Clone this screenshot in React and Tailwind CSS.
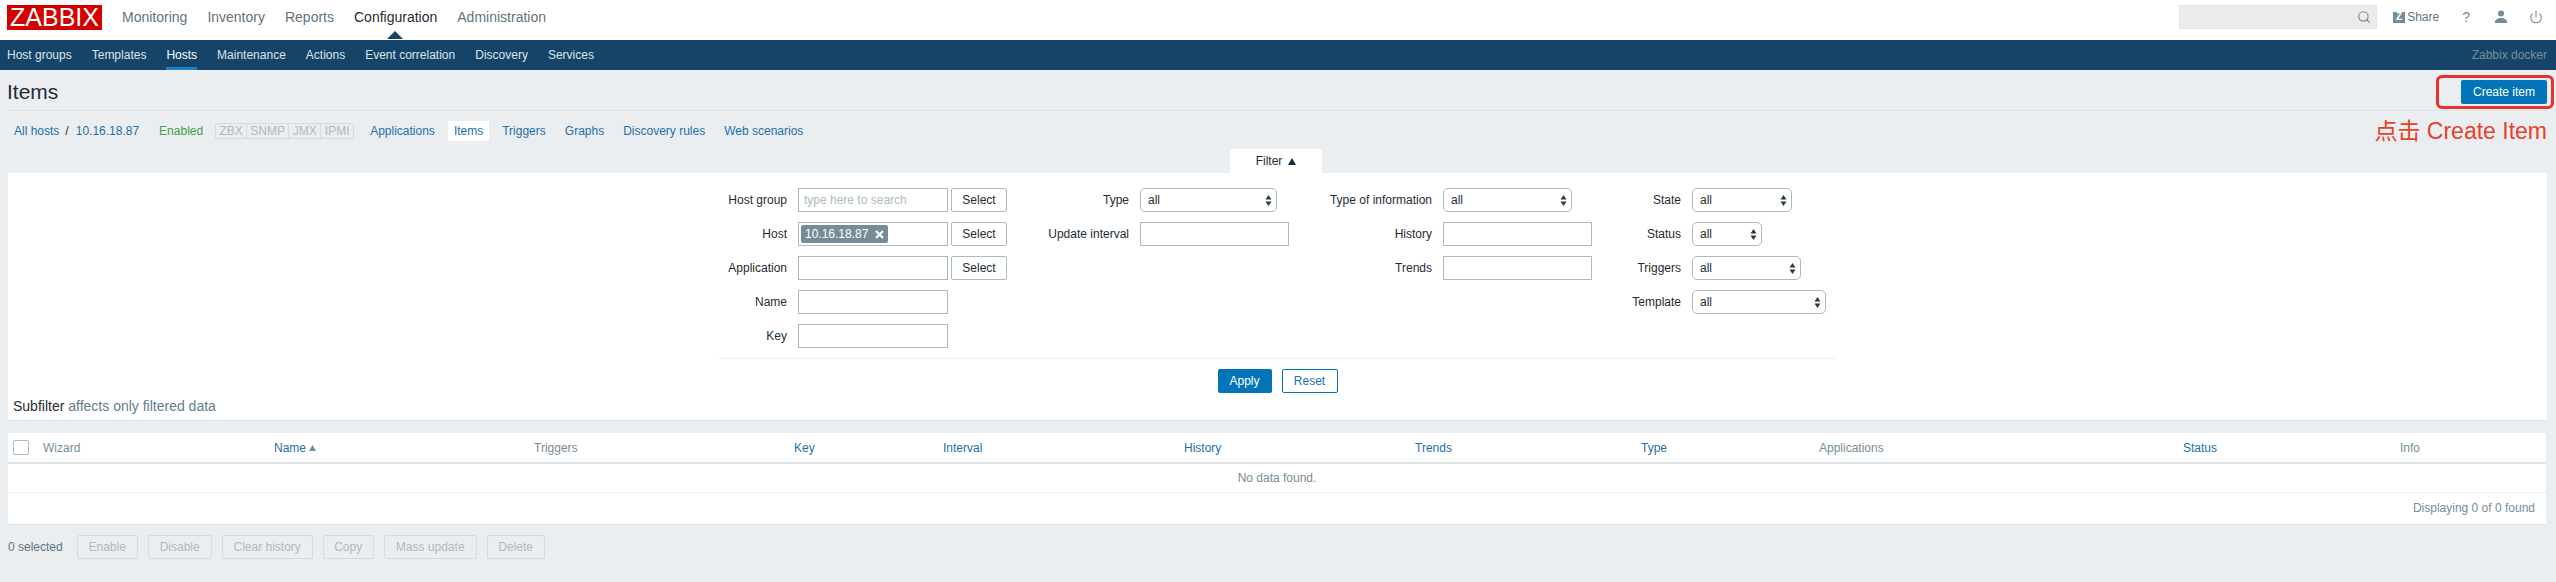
import React from "react";
import { Search, Power } from "lucide-react";

const topMenu = ["Monitoring", "Inventory", "Reports", "Configuration", "Administration"];
const subMenu = ["Host groups", "Templates", "Hosts", "Maintenance", "Actions", "Event correlation", "Discovery", "Services"];
const hostTabs = ["Applications", "Items", "Triggers", "Graphs", "Discovery rules", "Web scenarios"];
const massButtons = [
  { label: "Enable", width: "w-[61px]" },
  { label: "Disable", width: "w-[64px]" },
  { label: "Clear history", width: "w-[91px]" },
  { label: "Copy", width: "w-[51px]" },
  { label: "Mass update", width: "w-[93px]" },
  { label: "Delete", width: "w-[58px]" },
];

function SelectArrows() {
  return (
    <svg className="pointer-events-none absolute right-[5px] top-[7px]" width="7" height="11" viewBox="0 0 7 11">
      <path d="M3.5 0 L6.5 4.4 H0.5 Z M3.5 11 L6.5 6.6 H0.5 Z" fill="#2b3a42" />
    </svg>
  );
}

function FilterSelect({ width }) {
  return (
    <div className={`relative h-6 ${width}`}>
      <select className="h-6 w-full appearance-none rounded-[5px] border border-[#acbbc2] bg-white pl-[7px] text-[12px] leading-none text-[#1f2c33] outline-none">
        <option>all</option>
      </select>
      <SelectArrows />
    </div>
  );
}

function TextInput({ width = "w-[150px]", placeholder }) {
  return (
    <input
      type="text"
      placeholder={placeholder}
      className={`h-6 ${width} border border-[#acbbc2] bg-white px-[5px] text-[12px] text-[#1f2c33] outline-none placeholder:text-[#acbbc2]`}
    />
  );
}

function SelectButton() {
  return (
    <button className="ml-[3px] h-6 w-[56px] rounded-[2px] border border-[#acbbc2] bg-white text-[12px] text-[#1f2c33]">
      Select
    </button>
  );
}

function Row({ label, labelWidth, children }) {
  return (
    <div className="flex h-6 items-center">
      <label className={`${labelWidth} text-right text-[12px] text-[#1f2c33]`}>{label}</label>
      <div className="ml-[11px] flex items-center">{children}</div>
    </div>
  );
}

function UserIcon() {
  return (
    <svg width="14" height="14" viewBox="0 0 14 14" fill="#768d99">
      <circle cx="7" cy="3.6" r="3" />
      <path d="M0.8 13 C0.8 9.6 3.6 8 7 8 C10.4 8 13.2 9.6 13.2 13 Z" />
    </svg>
  );
}

export default function App() {
  return (
    <div className="min-h-screen bg-[#ebeef0] font-['Liberation_Sans','Noto_Sans_CJK_SC',sans-serif] text-[12px] text-[#1f2c33]">
      {/* top bar */}
      <header className="flex h-10 items-center bg-white pb-[6px] pl-[7px] pr-[13px]">
        <div className="flex h-[25px] w-[95px] items-center justify-center bg-[#d40000] text-[25px] leading-none text-white">
          ZABBIX
        </div>
        <nav className="ml-5 flex gap-[20px] text-[14px] text-[#5f7380]">
          {topMenu.map((item) => (
            <a key={item} href="#" className={item === "Configuration" ? "relative text-[#1f2c33]" : ""}>
              {item}
              {item === "Configuration" && (
                <span className="absolute left-[33px] top-[24px] h-0 w-0 border-x-[8px] border-b-[8px] border-x-transparent border-b-[#164469]" />
              )}
            </a>
          ))}
        </nav>
        <div className="ml-auto flex h-6 w-[198px] items-center justify-end border border-[#e3e6e8] bg-[#ebebeb] pr-[5px]">
          <Search size={14} strokeWidth={2} className="text-[#768d99]" />
        </div>
        <div className="ml-4 flex items-center">
          <span className="flex h-[11px] w-3 items-center justify-center bg-[#768d99] text-[10px] font-bold leading-none text-white">Z</span>
          <span className="ml-[2px] text-[12px] text-[#5f7380]">Share</span>
        </div>
        <span className="ml-[23px] text-[14px] text-[#768d99]">?</span>
        <span className="ml-[24px]">
          <UserIcon />
        </span>
        <Power size={14} strokeWidth={1.8} className="ml-[21px] text-[#768d99]" />
      </header>

      {/* sub menu */}
      <div className="flex h-[30px] items-center justify-between bg-[#164469] pl-[7px] pr-[9px]">
        <nav className="flex h-full gap-[20px] text-[12px] text-[#dbe4ea]">
          {subMenu.map((item) => (
            <a
              key={item}
              href="#"
              className={
                item === "Hosts"
                  ? "flex h-full items-center border-b-[3px] border-[#1f7fc0] pt-[3px] text-white"
                  : "flex h-full items-center"
              }
            >
              {item}
            </a>
          ))}
        </nav>
        <span className="text-[12px] text-[#768d99]">Zabbix docker</span>
      </div>

      <main className="pl-2 pr-[9px]">
        {/* title */}
        <div className="relative flex h-[41px] items-center justify-between border-b border-[#dfe4e7] pt-[3px]">
          <h1 className="-ml-px text-[21px] leading-none text-[#1f2c33]">Items</h1>
          <button className="h-6 w-[86px] rounded-[2px] bg-[#0275b8] text-[12px] text-white">Create item</button>
          <div className="absolute -right-[7px] top-[5px] h-[34px] w-[118px] rounded-[6px] border-[3px] border-[#e8312a]" />
        </div>

        {/* host navigation */}
        <div className="relative mb-2 mt-[10px] flex h-5 items-center pl-[6px] text-[12px] text-[#1f6fa8]">
          <a href="#">All hosts</a>
          <span className="ml-[6px] text-[#1f2c33]">/</span>
          <a href="#" className="ml-[7px]">10.16.18.87</a>
          <span className="ml-5 text-[#429e47]">Enabled</span>
          <div className="ml-3 flex h-4 items-center rounded-[2px] border border-[#d5dbdf] text-[#acbbc2]">
            <span className="flex h-full w-[31px] items-center justify-center border-r border-[#d5dbdf]">ZBX</span>
            <span className="flex h-full w-[42px] items-center justify-center border-r border-[#d5dbdf]">SNMP</span>
            <span className="flex h-full w-[32px] items-center justify-center border-r border-[#d5dbdf]">JMX</span>
            <span className="flex h-full w-[32px] items-center justify-center">IPMI</span>
          </div>
          <div className="ml-[10px] flex gap-[7px]">
            {hostTabs.map((tab) => (
              <a key={tab} href="#" className={tab === "Items" ? "flex h-5 items-center bg-white px-[6px]" : "flex h-5 items-center px-[6px]"}>
                {tab}
              </a>
            ))}
          </div>
          <span className="absolute right-0 top-[-6px] text-[23px] leading-[32px] text-[#e8412b]">点击 Create Item</span>
        </div>

        {/* filter */}
        <div className="flex justify-center pr-[3px]">
          <div className="flex h-6 w-[92px] items-center justify-center gap-[6px] bg-white text-[12px]">
            Filter
            <svg width="8" height="7" viewBox="0 0 8 7">
              <path d="M4 0 L8 7 H0 Z" fill="#1f2c33" />
            </svg>
          </div>
        </div>
        <section className="border-b border-[#dfe4e7] bg-white">
          <div className="mx-auto w-[1117px] pt-[15px]">
            <div className="flex">
              <div className="flex w-[288px] flex-col gap-[10px]">
                <Row label="Host group" labelWidth="w-[68px]">
                  <TextInput placeholder="type here to search" />
                  <SelectButton />
                </Row>
                <Row label="Host" labelWidth="w-[68px]">
                  <div className="flex h-6 w-[150px] items-center border border-[#acbbc2] bg-white pl-[2px]">
                    <span className="flex h-[18px] items-center gap-[7px] rounded-[2px] bg-[#768d99] pl-1 pr-1 text-[12px] text-white">
                      10.16.18.87
                      <svg width="9" height="9" viewBox="0 0 9 9">
                        <path d="M1 1 L8 8 M8 1 L1 8" stroke="#fff" strokeWidth="2.2" />
                      </svg>
                    </span>
                  </div>
                  <SelectButton />
                </Row>
                <Row label="Application" labelWidth="w-[68px]">
                  <TextInput />
                  <SelectButton />
                </Row>
                <Row label="Name" labelWidth="w-[68px]">
                  <TextInput />
                </Row>
                <Row label="Key" labelWidth="w-[68px]">
                  <TextInput />
                </Row>
              </div>
              <div className="flex w-[282px] flex-col gap-[10px]">
                <Row label="Type" labelWidth="w-[122px]">
                  <FilterSelect width="w-[137px]" />
                </Row>
                <Row label="Update interval" labelWidth="w-[122px]">
                  <TextInput width="w-[149px]" />
                </Row>
              </div>
              <div className="flex w-[303px] flex-col gap-[10px]">
                <Row label="Type of information" labelWidth="w-[143px]">
                  <FilterSelect width="w-[129px]" />
                </Row>
                <Row label="History" labelWidth="w-[143px]">
                  <TextInput width="w-[149px]" />
                </Row>
                <Row label="Trends" labelWidth="w-[143px]">
                  <TextInput width="w-[149px]" />
                </Row>
              </div>
              <div className="flex w-[244px] flex-col gap-[10px]">
                <Row label="State" labelWidth="w-[89px]">
                  <FilterSelect width="w-[100px]" />
                </Row>
                <Row label="Status" labelWidth="w-[89px]">
                  <FilterSelect width="w-[70px]" />
                </Row>
                <Row label="Triggers" labelWidth="w-[89px]">
                  <FilterSelect width="w-[109px]" />
                </Row>
                <Row label="Template" labelWidth="w-[89px]">
                  <FilterSelect width="w-[134px]" />
                </Row>
              </div>
            </div>
            <div className="mt-[10px] flex justify-center gap-[10px] border-t border-[#ebeef0] pt-[10px]">
              <button className="h-6 w-[54px] rounded-[2px] bg-[#0275b8] text-[12px] text-white">Apply</button>
              <button className="h-6 w-[56px] rounded-[2px] border border-[#0275b8] bg-white text-[12px] text-[#1f6fa8]">Reset</button>
            </div>
          </div>
          <div className="flex h-[27px] items-center pl-[5px] text-[14px] text-[#1f2c33]">
            Subfilter&nbsp;<span className="text-[#5f7d8c]">affects only filtered data</span>
          </div>
        </section>

        {/* items table */}
        <section className="mt-3 w-[2538px] border-b border-[#dfe4e7] bg-white">
          <table className="w-full table-fixed border-collapse text-[12px]">
            <colgroup>
              <col className="w-[35px]" />
              <col className="w-[231px]" />
              <col className="w-[260px]" />
              <col className="w-[260px]" />
              <col className="w-[149px]" />
              <col className="w-[241px]" />
              <col className="w-[231px]" />
              <col className="w-[226px]" />
              <col className="w-[178px]" />
              <col className="w-[364px]" />
              <col className="w-[217px]" />
              <col className="w-[146px]" />
            </colgroup>
            <thead>
              <tr className="h-[30px] border-b-2 border-[#dfe4e7] text-left font-normal">
                <th className="pl-[5px] font-normal">
                  <span className="block h-[15px] w-4 rounded-[2px] border border-[#acbbc2] bg-white" />
                </th>
                <th className="font-normal text-[#768d99]">Wizard</th>
                <th className="font-normal text-[#1f6fa8]">
                  Name
                  <svg className="ml-[3px] inline-block" width="7" height="6" viewBox="0 0 7 6">
                    <path d="M3.5 0 L7 6 H0 Z" fill="#768d99" />
                  </svg>
                </th>
                <th className="font-normal text-[#768d99]">Triggers</th>
                <th className="font-normal text-[#1f6fa8]">Key</th>
                <th className="font-normal text-[#1f6fa8]">Interval</th>
                <th className="font-normal text-[#1f6fa8]">History</th>
                <th className="font-normal text-[#1f6fa8]">Trends</th>
                <th className="font-normal text-[#1f6fa8]">Type</th>
                <th className="font-normal text-[#768d99]">Applications</th>
                <th className="font-normal text-[#1f6fa8]">Status</th>
                <th className="font-normal text-[#768d99]">Info</th>
              </tr>
            </thead>
            <tbody>
              <tr className="h-[29px] border-b border-[#ebeef0]">
                <td colSpan={12} className="text-center text-[#768d99]">No data found.</td>
              </tr>
            </tbody>
          </table>
          <div className="flex h-[31px] items-center justify-end pr-[11px] text-[#768d99]">Displaying 0 of 0 found</div>
        </section>

        {/* mass actions */}
        <div className="mt-[10px] flex items-center gap-[10px]">
          <span className="mr-[4px] text-[#5f7380]">0 selected</span>
          {massButtons.map((b) => (
            <button
              key={b.label}
              disabled
              className={`h-6 ${b.width} rounded-[2px] border border-[#d5dbdf] bg-[#ebeef0] text-[12px] text-[#acbbc2]`}
            >
              {b.label}
            </button>
          ))}
        </div>
      </main>
    </div>
  );
}
